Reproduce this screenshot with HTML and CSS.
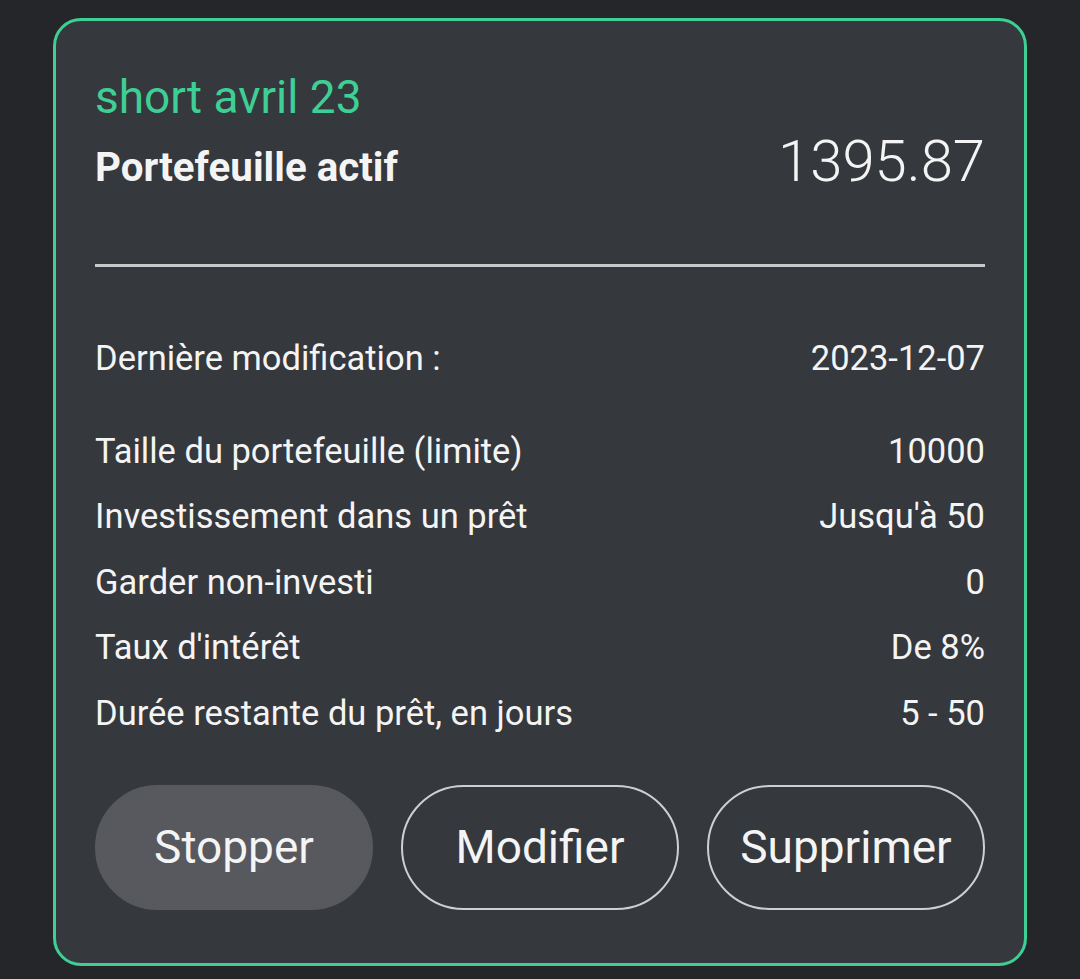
FILE: index.html
```html
<!DOCTYPE html>
<html lang="fr">
<head>
    <meta charset="UTF-8">
    <meta name="viewport" content="width=device-width, initial-scale=1.0">
    <title>Portefeuille</title>
    <link rel="stylesheet" href="styles.css">
</head>
<body>
    <div class="card">
        <div class="name">short avril 23</div>
        <div class="head">
            <div class="status">Portefeuille actif</div>
            <div class="amount">1395.87</div>
        </div>
        <hr class="divider">

        <div class="row first"><span>Dernière modification :</span><span>2023-12-07</span></div>
        <div class="details">
            <div class="row"><span>Taille du portefeuille (limite)</span><span>10000</span></div>
            <div class="row"><span>Investissement dans un prêt</span><span>Jusqu'à 50</span></div>
            <div class="row"><span>Garder non-investi</span><span>0</span></div>
            <div class="row"><span>Taux d'intérêt</span><span>De 8%</span></div>
            <div class="row"><span>Durée restante du prêt, en jours</span><span>5 - 50</span></div>
        </div>

        <div class="actions">
            <button class="btn filled">Stopper</button>
            <button class="btn">Modifier</button>
            <button class="btn">Supprimer</button>
        </div>
    </div>
</body>
</html>
```

FILE: styles.css
```css
body{
    background-color: #24262a;
    margin: 0;
    font-family: Roboto, "Liberation Sans", sans-serif;
    color: #f4f4f4;
}
.card{
    box-sizing: border-box;
    margin: 18px 0 0 53px;
    width: 974px;
    height: 948px;
    border: 3px solid #3ecf95;
    border-radius: 28px;
    background-color: #35383d;
    padding: 53px 39px 0 39px;
}
.name{
    font-size: 46px;
    color: #3ecf95;
    line-height: 46px;
}
.head{
    display: flex;
    justify-content: space-between;
    align-items: baseline;
    margin-top: 18px;
}
.status{font-size: 40.3px; font-weight: bold; line-height: 46px;}
.amount{font-size: 58px; font-weight: 300; line-height: 46px;}
.divider{
    border: none;
    height: 3px;
    background-color: #c9c9c9;
    margin: 73px 0 0 0;
}
.row{
    display: flex;
    justify-content: space-between;
    font-size: 34.5px;
    height: 65.5px;
    align-items: center;
}
.row.first{margin-top: 58px; height: 66px;}
.details{margin-top: 27px;}
.actions{
    display: flex;
    gap: 28px;
    margin-top: 39px;
}
.btn{
    width: 278px;
    height: 125px;
    border-radius: 63px;
    border: 2px solid #cfcfcf;
    background: transparent;
    color: #f4f4f4;
    font-family: Roboto, "Liberation Sans", sans-serif;
    font-size: 46px;
}
.btn.filled{border-color: #57595e; background-color: #57595e;}
```
